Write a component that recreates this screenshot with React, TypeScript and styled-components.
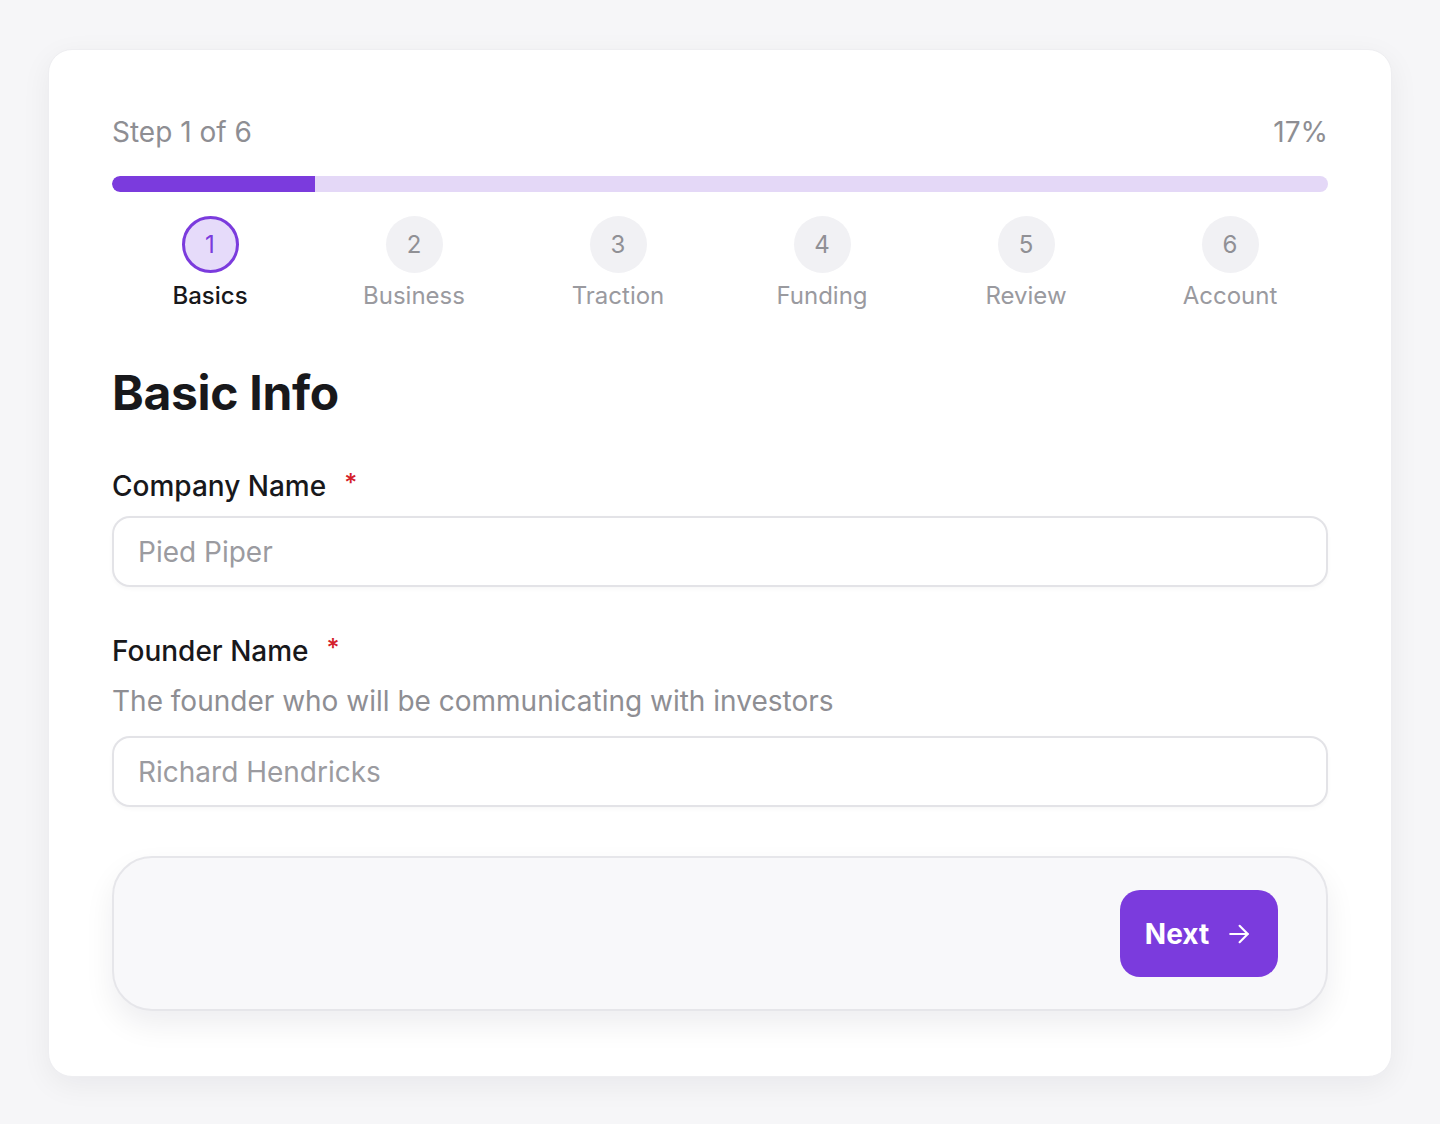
import React from "react";
import styled, { createGlobalStyle } from "styled-components";

const Global = createGlobalStyle`
  html, body { margin: 0; padding: 0; background: #f6f6f8; }
  body { font-family: Inter, "Noto Sans", sans-serif; -webkit-font-smoothing: antialiased; }
  * { box-sizing: border-box; }
`;

const Page = styled.div`
  min-height: 1124px;
  padding: 49px 48px 48px;
`;

const Card = styled.div`
  background: #ffffff;
  border-radius: 24px;
  border: 1px solid #eeeef1;
  box-shadow: 0 8px 30px rgba(20, 20, 40, 0.06);
  padding: 60px 63px 65px;
  display: flex;
  flex-direction: column;
`;

const TopRow = styled.div`
  display: flex;
  justify-content: space-between;
  align-items: center;
  font-size: 28px;
  color: #8e8e93;
  line-height: 44px;
`;

const Track = styled.div`
  margin-top: 22px;
  height: 16px;
  border-radius: 8px;
  background: #e4d8f7;
  overflow: hidden;
`;

const Fill = styled.div`
  height: 100%;
  background: #7b3bdd;
  border-radius: 8px 0 0 8px;
`;

const Steps = styled.div`
  margin-top: 24px;
  display: grid;
  grid-template-columns: repeat(6, 1fr);
  gap: 8px;
`;

const Step = styled.div`
  display: flex;
  flex-direction: column;
  align-items: center;
`;

const Circle = styled.div<{ $active?: boolean }>`
  width: 57px;
  height: 57px;
  border-radius: 50%;
  display: flex;
  align-items: center;
  justify-content: center;
  font-size: 24px;
  background: ${(p) => (p.$active ? "#e6dbfa" : "#f1f1f4")};
  border: ${(p) => (p.$active ? "3px solid #7b3bdd" : "none")};
  color: ${(p) => (p.$active ? "#7b3bdd" : "#909095")};
`;

const StepLabel = styled.div<{ $active?: boolean }>`
  margin-top: 5px;
  font-size: 24px;
  line-height: 36px;
  font-weight: ${(p) => (p.$active ? 500 : 400)};
  color: ${(p) => (p.$active ? "#18181b" : "#9a9a9f")};
`;

const Heading = styled.h1`
  margin: 51px 0 0;
  font-size: 48px;
  line-height: 56px;
  font-weight: 700;
  color: #18181b;
  letter-spacing: -0.3px;
`;

const Field = styled.div<{ $top: number }>`
  margin-top: ${(p) => p.$top}px;
  display: flex;
  flex-direction: column;
`;

const Label = styled.label`
  font-size: 28px;
  font-weight: 500;
  line-height: 40px;
  color: #18181b;
  display: flex;
  align-items: center;
`;

const Star = styled.span`
  color: #d4202a;
  margin-left: 18px;
  font-size: 25px;
  position: relative;
  top: -3px;
`;

const Help = styled.div`
  margin-top: 10px;
  font-size: 28px;
  line-height: 40px;
  color: #8e8e93;
`;

const Input = styled.input<{ $top: number }>`
  margin-top: ${(p) => p.$top}px;
  height: 71px;
  border: 2px solid #e3e3e7;
  border-radius: 18px;
  padding: 0 24px;
  font-family: inherit;
  font-size: 28px;
  color: #18181b;
  background: #fff;
  box-shadow: 0 2px 4px rgba(0, 0, 0, 0.03);
  outline: none;
  &::placeholder { color: #9b9ba0; }
`;

const Footer = styled.div`
  margin-top: 49px;
  height: 155px;
  border-radius: 40px;
  border: 2px solid #e6e6ea;
  background: #f8f8fa;
  box-shadow: 0 14px 30px rgba(20, 20, 40, 0.07);
  display: flex;
  align-items: center;
  justify-content: flex-end;
  padding: 0 48px;
`;

const NextButton = styled.button`
  width: 158px;
  height: 87px;
  border: none;
  border-radius: 20px;
  background: #7b3bdd;
  color: #fff;
  font-family: inherit;
  font-size: 28px;
  font-weight: 700;
  display: flex;
  align-items: center;
  justify-content: center;
  gap: 16px;
  cursor: pointer;
`;

const steps = ["Basics", "Business", "Traction", "Funding", "Review", "Account"];

export default function App() {
  const pct = 1 / 6;
  return (
    <>
      <Global />
      <Page>
        <Card>
          <TopRow>
            <span>Step 1 of 6</span>
            <span>17%</span>
          </TopRow>
          <Track>
            <Fill style={{ width: `${pct * 100}%` }} />
          </Track>
          <Steps>
            {steps.map((s, i) => (
              <Step key={s}>
                <Circle $active={i === 0}>{i + 1}</Circle>
                <StepLabel $active={i === 0}>{s}</StepLabel>
              </Step>
            ))}
          </Steps>
          <Heading>Basic Info</Heading>
          <Field $top={45}>
            <Label>
              Company Name<Star>*</Star>
            </Label>
            <Input $top={10} placeholder="Pied Piper" />
          </Field>
          <Field $top={44}>
            <Label>
              Founder Name<Star>*</Star>
            </Label>
            <Help>The founder who will be communicating with investors</Help>
            <Input $top={15} placeholder="Richard Hendricks" />
          </Field>
          <Footer>
            <NextButton>
              Next
              <svg width="28" height="28" viewBox="0 0 24 24" fill="none" stroke="#fff" strokeWidth="1.8" strokeLinecap="round" strokeLinejoin="round">
                <path d="M4.5 12h15" />
                <path d="M12.5 5l7 7-7 7" />
              </svg>
            </NextButton>
          </Footer>
        </Card>
      </Page>
    </>
  );
}
